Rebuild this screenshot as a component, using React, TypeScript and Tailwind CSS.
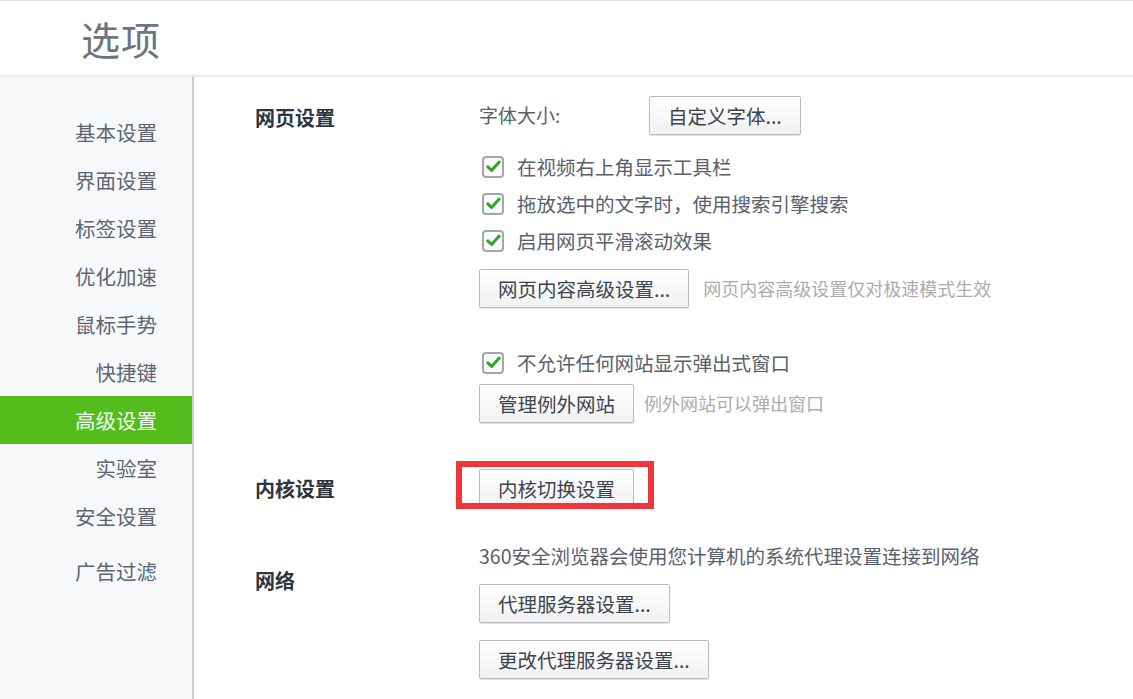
import React from 'react';

const FONT = { fontFamily: '"Microsoft YaHei", "Noto Sans CJK SC", "Noto Sans", sans-serif' };

const menu = ['基本设置', '界面设置', '标签设置', '优化加速', '鼠标手势', '快捷键', '高级设置', '实验室', '安全设置'];

function Btn({ children }: { children: React.ReactNode }) {
  return (
    <button className="h-[39px] px-[18px] text-[19.5px] leading-none text-[#3b4450] bg-gradient-to-b from-white to-[#f1f1f1] border border-[#b9bcc0] rounded-[2px] shadow-[0_1px_1px_rgba(0,0,0,0.12)] whitespace-nowrap">
      {children}
    </button>
  );
}

function Check({ label }: { label: string }) {
  return (
    <div className="h-[37px] flex items-center">
      <div className="w-[22px] h-[22px] ml-[3px] rounded-[4px] border-2 border-[#a3a6aa] bg-[#fbfbfb] flex items-center justify-center">
        <svg width="15" height="13" viewBox="0 0 15 13">
          <path d="M1.8 6.8 L5.6 10.4 L13.2 2" fill="none" stroke="#2fa62b" strokeWidth="3" strokeLinecap="round" strokeLinejoin="round" />
        </svg>
      </div>
      <span className="ml-[13px] text-[19.5px] text-[#59616c] leading-none">{label}</span>
    </div>
  );
}

export default function App() {
  return (
    <div className="w-[1133px] h-[699px] overflow-hidden bg-white flex flex-col border-t border-[#dcdcdc]" style={FONT}>
      {/* Header */}
      <div className="h-[76px] shrink-0 flex items-center pl-[81px] border-b-2 border-[#e9eaec]">
        <h1 className="text-[39px] text-[#6b7480] leading-none tracking-[1px]">选项</h1>
      </div>

      <div className="flex flex-1 min-h-0">
        {/* Sidebar */}
        <div className="w-[194px] shrink-0 bg-[#f7f8fa] border-r-2 border-[#cbcbcb] pt-[31px]">
          {menu.map(m => (
            <div
              key={m}
              className={`h-[48px] flex items-center justify-end pr-[35px] text-[20.5px] leading-none ${m === '高级设置' ? 'bg-[#54bd1e] text-[#f2fff0]' : 'text-[#5d6676]'}`}
            >
              {m}
            </div>
          ))}
          <div className="h-[48px] mt-[7px] flex items-center justify-end pr-[35px] text-[20.5px] leading-none text-[#5d6676]">广告过滤</div>
        </div>

        {/* Content */}
        <div className="flex-1 pl-[61px] pt-[19px] flex flex-col">
          {/* 网页设置 */}
          <div className="flex">
            <div className="w-[224px] shrink-0 h-[30px] mt-[7px] flex items-center text-[20px] font-bold text-[#2c3541]">网页设置</div>
            <div className="flex flex-col items-start">
              <div className="h-[39px] flex items-center">
                <span className="w-[170px] text-[19px] text-[#5b636e]">字体大小:</span>
                <Btn>自定义字体...</Btn>
              </div>
              <div className="mt-[13px]">
                <Check label="在视频右上角显示工具栏" />
                <Check label="拖放选中的文字时，使用搜索引擎搜索" />
                <Check label="启用网页平滑滚动效果" />
              </div>
              <div className="mt-[10px] flex items-center">
                <Btn>网页内容高级设置...</Btn>
                <span className="ml-[14px] text-[18px] text-[#acacac]">网页内容高级设置仅对极速模式生效</span>
              </div>
              <div className="mt-[36px]">
                <Check label="不允许任何网站显示弹出式窗口" />
              </div>
              <div className="mt-[3px] flex items-center">
                <Btn>管理例外网站</Btn>
                <span className="ml-[10px] text-[18px] text-[#acacac]">例外网站可以弹出窗口</span>
              </div>
            </div>
          </div>

          {/* 内核设置 */}
          <div className="flex items-center mt-[46px]">
            <div className="w-[224px] shrink-0 text-[20px] font-bold text-[#2c3541]">内核设置</div>
            <div className="relative">
              <Btn>内核切换设置</Btn>
              <span className="absolute left-[-23px] top-[-8px] w-[198px] h-[48px] border-[6px] border-[#f0363b]" />
            </div>
          </div>

          {/* 网络 */}
          <div className="flex mt-[33px]">
            <div className="w-[224px] shrink-0 h-[30px] mt-[25px] flex items-center text-[20px] font-bold text-[#2c3541]">网络</div>
            <div className="flex flex-col items-start">
              <div className="h-[30px] flex items-center text-[19.5px] text-[#59616c]">360安全浏览器会使用您计算机的系统代理设置连接到网络</div>
              <div className="mt-[13px]"><Btn>代理服务器设置...</Btn></div>
              <div className="mt-[17px]"><Btn>更改代理服务器设置...</Btn></div>
            </div>
          </div>
        </div>
      </div>
    </div>
  );
}
